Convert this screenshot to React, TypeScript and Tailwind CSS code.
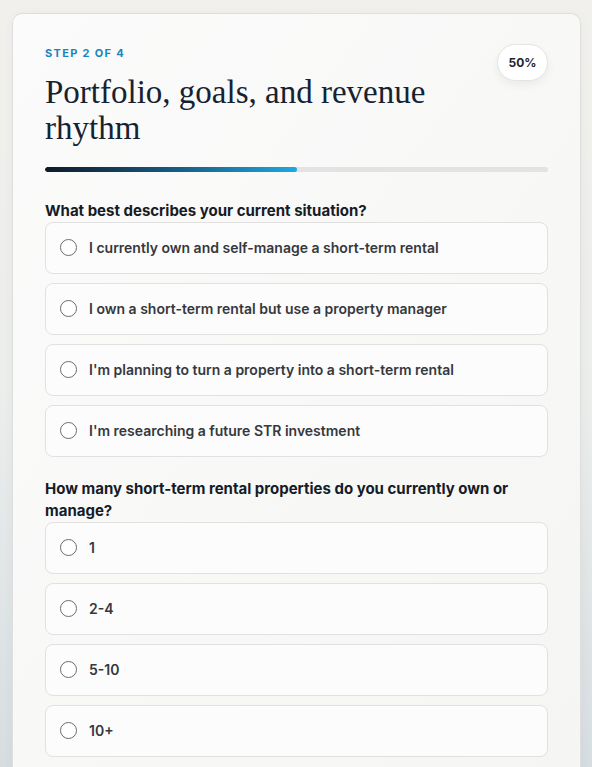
import React from "react";

const q1 = [
  "I currently own and self-manage a short-term rental",
  "I own a short-term rental but use a property manager",
  "I'm planning to turn a property into a short-term rental",
  "I'm researching a future STR investment",
];
const q2 = ["1", "2-4", "5-10", "10+"];

function Option({ label }: { label: string }) {
  return (
    <div className="flex h-[52px] items-center gap-[12px] rounded-[8px] border border-[#e1e1e1] bg-[#fcfcfc] px-[14px]">
      <span className="h-[17px] w-[17px] shrink-0 rounded-full border-[1.5px] border-[#6b6b6b] bg-white" />
      <span className="text-[14px] font-semibold text-[#35383d]">{label}</span>
    </div>
  );
}

export default function App() {
  return (
    <div
      className="min-h-[767px] bg-gradient-to-b from-[#f1f0ed] via-[#eceeec] to-[#d6dde1] px-[12px] pt-[13px] pr-[11px]"
      style={{ fontFamily: "Inter, 'Noto Sans', sans-serif" }}
    >
      <div className="min-h-[760px] rounded-t-[10px] border border-b-0 border-[#dedede] bg-gradient-to-br from-[#fbfbfb] via-[#f8f8f7] to-[#f5f5f4] px-[32px] pt-[31px] shadow-[0_2px_12px_rgba(0,0,0,0.04)]">
        <div className="flex items-start justify-between">
          <div>
            <div className="text-[11px] font-bold tracking-[0.12em] text-[#1786bd]">STEP 2 OF 4</div>
            <h1
              className="mt-[12px] max-w-[420px] text-[33px] leading-[36px] text-[#162231]"
              style={{ fontFamily: "'Liberation Serif', Georgia, serif" }}
            >
              Portfolio, goals, and revenue rhythm
            </h1>
          </div>
          <div className="mt-[-1px] flex h-[37px] w-[51px] items-center justify-center rounded-full border border-[#e4e4e4] bg-white text-[12px] font-bold text-[#1e2530] shadow-[0_4px_10px_rgba(0,0,0,0.06)]">
            50%
          </div>
        </div>
        <div className="mt-[21px] h-[5px] w-full overflow-hidden rounded-full bg-[#e3e3e3]">
          <div className="h-full w-1/2 rounded-full bg-gradient-to-r from-[#0d1a2b] via-[#145a80] to-[#1ea8e2]" />
        </div>

        <div className="mt-[28px] text-[15px] font-bold leading-[22px] text-[#151c27]">
          What best describes your current situation?
        </div>
        <div className="flex flex-col gap-[9px]">
          {q1.map((l) => (
            <Option key={l} label={l} />
          ))}
        </div>

        <div className="mt-[21px] text-[15px] font-bold leading-[22px] text-[#151c27]">
          How many short-term rental properties do you currently own or manage?
        </div>
        <div className="flex flex-col gap-[9px]">
          {q2.map((l) => (
            <Option key={l} label={l} />
          ))}
        </div>
      </div>
    </div>
  );
}
